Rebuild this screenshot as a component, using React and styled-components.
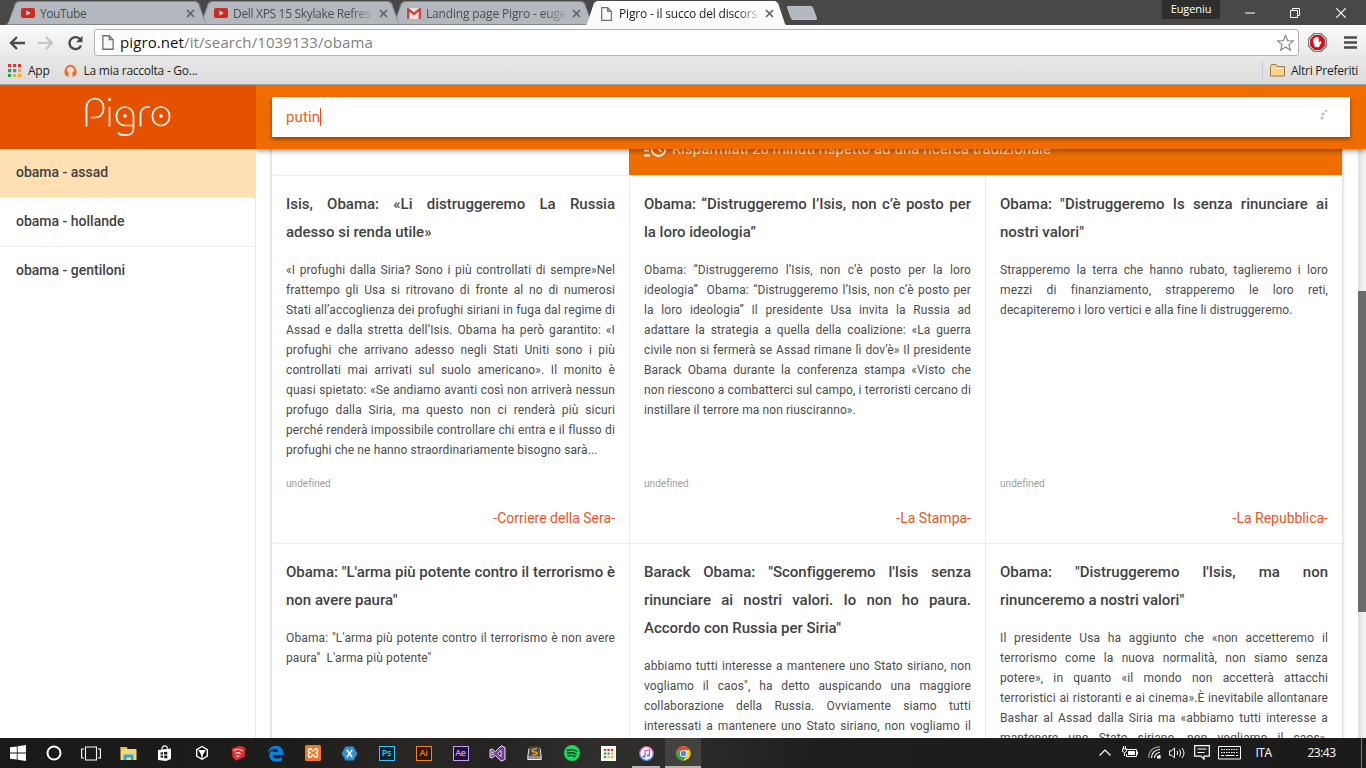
import React from 'react';
import styled, { createGlobalStyle, css } from 'styled-components';

const GlobalStyle = createGlobalStyle`
  * { box-sizing: border-box; }
  body { margin: 0; background: #fff; overflow: hidden; }
  svg { display: block; flex: none; }
`;

const ui = css`font-family: "Open Sans", "Noto Sans", sans-serif;`;

const Screen = styled.div`
  width: 1366px; height: 768px; display: flex; flex-direction: column;
  overflow: hidden; font-family: Roboto, sans-serif; color: #424242;
`;

/* Window frame */
const TitleBar = styled.div`
  height: 25px; flex: none; display: flex; align-items: flex-start;
  background: #4a4846; padding-left: 6px; ${ui}
`;
const Tab = styled.div`
  position: relative; width: 202px; height: ${p => (p.$active ? 25 : 24)}px; margin: 1px -9px 0 0;
  z-index: ${p => p.$z}; display: flex; align-items: center; padding: 0 10px 0 ${p => (p.$active ? 16 : 15)}px;
  font-size: 12px; letter-spacing: ${p => p.$spacing || 0}px; color: ${p => (p.$active ? '#1d1d1d' : '#4b4d50')};
  &::before, &::after { content: ''; position: absolute; z-index: -1; }
  &::before { inset: 0; background: ${p => (p.$active ? '#fff' : '#83868a')};
    clip-path: polygon(0 100%, 2px 92%, 9px 8%, 12px 0, 190px 0, 193px 8%, 200px 92%, 202px 100%); }
  &::after { inset: 1px 1px ${p => (p.$active ? 0 : 1)}px 1px;
    background: ${p => (p.$active ? 'linear-gradient(#fff, #f9f9f9)' : '#b3b8bf')};
    clip-path: polygon(0 100%, 2px 92%, 9px 8%, 12px 0, 188px 0, 191px 8%, 198px 92%, 200px 100%); }
`;
const TabTitle = styled.div`
  flex: 1; min-width: 0; margin-left: ${p => (p.$gap || 5)}px; overflow: hidden; white-space: nowrap; line-height: 23px;
  mask-image: ${p => (p.$fade ? 'linear-gradient(to right, #000 118px, transparent 144px)' : 'none')};
`;
const TabClose = styled.span`margin: 0 3px 0 6px; display: flex;`;
const NewTab = styled.div`
  width: 26px; height: 14px; margin: 6px 0 0 11px; background: #b3b8bf;
  border-radius: 2px; transform: skewX(20deg); border: 1px solid #c0c4ca;
`;
const User = styled.div`
  width: 58px; height: 19px; margin-left: auto; background: #2f2e2c; color: #fff;
  font-size: 11px; line-height: 18px; text-align: center; letter-spacing: -.1px;
`;
const WindowButtons = styled.div`display: flex; width: 146px; height: 25px; padding-left: 7px;`;
const WindowButton = styled.div`width: 45.500px; display: flex; align-items: center; justify-content: center;`;

const Toolbar = styled.div`
  height: 31px; flex: none; display: flex; align-items: center; padding: 4px 8px 0 8px;
  background: linear-gradient(#fafafa, #e9e9e9); ${ui}
`;
const NavIcons = styled.div`display: flex; gap: 13px; width: 86px; align-items: center; padding-left: 1px;`;
const Omnibox = styled.div`
  width: 1205px; height: 27px; background: #fff; border: 1px solid #b3b3b3; border-radius: 3px;
  display: flex; align-items: center; padding: 0 3px 0 7px;
`;
const Url = styled.div`
  margin-left: 6px; font-size: 15px; letter-spacing: .1px; color: #808080; flex: 1; line-height: 24px; padding-bottom: 1px;
  span { color: #111; }
`;
const ToolIcons = styled.div`display: flex; align-items: center; gap: 17px; margin-left: 9px;`;
const Bookmarks = styled.div`
  height: 29px; flex: none; display: flex; align-items: center; padding: 0 8px; font-size: 12px;
  background: linear-gradient(#e8e8e8, #dcdcdc); border-bottom: 1px solid #a3a3a3; color: #1f1f1f; ${ui}
`;
const Bookmark = styled.div`
  display: flex; align-items: center; gap: 7px; height: 21px; margin-left: ${p => p.$ml || 0}px;
  letter-spacing: -.25px; white-space: nowrap;
`;
const OtherBookmarks = styled(Bookmark)`
  margin-left: auto; border-left: 1px solid #c3ccd5; padding-left: 7px; gap: 6px; letter-spacing: -.25px;
`;

/* Page */
const Header = styled.header`
  height: 64px; flex: none; display: flex; position: relative; z-index: 5;
`;
const Brand = styled.div`
  width: 256px; background: #e65100; display: flex; justify-content: center; padding: 12px 0 0 0;
`;
const SearchBar = styled.div`
  flex: 1; background: #ef6c00; padding: 12px 16px; box-shadow: 0 2px 5px rgba(0,0,0,.42);
  clip-path: inset(0 0 -12px 0);
`;
const SearchField = styled.div`
  height: 40px; background: #fff; box-shadow: 0 2px 4px rgba(0,0,0,.42); display: flex; align-items: center;
  padding: 0 22px 0 14px; color: #e65c1a; font-size: 15px; font-weight: 400; letter-spacing: .1px;
`;
const Caret = styled.i`width: 1px; height: 18px; background: #e64a19; margin-right: auto;`;
const Body = styled.div`flex: 1; min-height: 0; display: flex;`;
const Sidebar = styled.nav`width: 256px; flex: none; border-right: 1px solid #e8e8e8; background: #fff;`;
const SideItem = styled.div`
  height: 49px; line-height: 47px; padding-left: 16px; font-size: 14px; font-weight: 500;
  border-bottom: 1px solid ${p => (p.$last ? 'transparent' : '#ebebeb')};
  background: ${p => (p.$active ? '#ffe0b2' : '#fff')}; background-clip: padding-box;
`;
const Main = styled.main`flex: 1; padding-left: 16px; overflow: hidden; display: flex;`;
const Sheet = styled.div`
  width: 1070px; height: 1000px; margin-top: -26px; background: #fff;
  box-shadow: 0 1px 4px rgba(0,0,0,.28);
`;
const SummaryRow = styled.div`display: grid; grid-template-columns: 357px 713px; height: 52px;`;
const Saving = styled.div`
  background: #ef6c00; display: flex; align-items: center; gap: 5px; padding: 0 0 0 15px;
  color: rgba(255,255,255,.8); font-size: 15px; font-weight: 400; grid-column: 2; letter-spacing: .05px;
`;
const Articles = styled.div`display: grid; grid-template-columns: 357px 356px 357px; grid-auto-rows: 368px;`;
const Article = styled.article`
  border-top: 1px solid #ebebeb; border-left: 1px solid ${p => (p.$first ? 'transparent' : '#ebebeb')};
  padding: 14px 14px 10px ${p => (p.$first ? 13 : 14)}px; display: flex; flex-direction: column; background: #fff;
`;
const Headline = styled.h2`
  margin: 0 0 14px; font-size: 15px; line-height: 28px; font-weight: 500; color: #424242; letter-spacing: -.01px;
`;
const Text = styled.div`font-size: 12px; line-height: 20px; color: #4c4c4c; letter-spacing: .12px;`;
const Line = styled.div`
  white-space: nowrap; text-align: justify; text-align-last: ${p => (p.$last ? 'left' : 'justify')};
`;
const Meta = styled.div`margin-top: auto; font-size: 10px; color: #9e9e9e; line-height: 20px; letter-spacing: .05px;`;
const Source = styled.div`
  margin-top: 9px; text-align: right; font-size: 14px; line-height: 30px; color: #e6561f; letter-spacing: 0;
`;
const ScrollTrack = styled.div`
  width: 8px; margin-left: auto; background: linear-gradient(to right, #dedede, #f1f1f1 70%); padding-top: 142px;
`;
const ScrollThumb = styled.div`height: 321px; background: #6b6b6b;`;

/* Taskbar */
const Taskbar = styled.div`
  height: 30px; flex: none; display: flex; align-items: stretch; color: #fff; position: relative; z-index: 6; ${ui}
  background: linear-gradient(100deg, #191919 0, #1d1d1c 22%, #292826 31%, #232322 36%, #302f2c 44%, #2a2927 52%, #1e1e1d 60%, #1b1b1b 100%);
`;
const Task = styled.div`
  width: ${p => p.$w || 37}px; display: flex; align-items: center; justify-content: center;
  background: ${p => (p.$active ? '#44423f' : 'transparent')};
  border-bottom: 2px solid ${p => (p.$open ? '#b5b5b4' : 'transparent')};
  border-top: 2px solid ${p => (p.$active ? '#44423f' : 'transparent')};
  margin: 0 ${p => (p.$inset || 0)}px;
`;
const Square = styled.div`
  width: 16px; height: 15px; border: 1px solid ${p => p.$c}; color: ${p => p.$c}; background: ${p => p.$bg};
  font-size: 9px; font-weight: 600; line-height: 12px; text-align: center; letter-spacing: -.3px;
`;
const Tray = styled.div`display: flex; align-items: center; margin-left: auto; font-size: 12px;`;
const TrayCell = styled.div`
  width: ${p => p.$w}px; display: flex; justify-content: center; letter-spacing: -.5px; padding-bottom: 1px;
`;
const ShowDesktop = styled.div`width: 5px; height: 30px; border-left: 1px solid #777;`;

const YouTube = () => (
  <svg width="14" height="10" viewBox="0 0 14 10"><rect width="14" height="10" rx="2" fill="#cc2b24" /><path d="M5.5 2.6 9.5 5 5.5 7.4z" fill="#fff" /></svg>
);
const Gmail = () => (
  <svg width="14" height="11" viewBox="0 0 14 11"><rect x="1" width="12" height="11" fill="#e4e4e4" /><path d="M1.200 11V1.200L7 6l5.800-4.800V11" fill="none" stroke="#d0433a" strokeWidth="2.300" /></svg>
);
const Page = ({ w = 11, h = 14 }) => (
  <svg width={w} height={h} viewBox="0 0 11 14"><path d="M.7.7h6l3.600 3.700v8.900H.7zM6.700.7v3.700h3.600" fill="#fafafa" stroke="#707070" strokeWidth="1.200" /></svg>
);
const Cross = ({ c = '#5f6164' }) => (
  <svg width="9" height="9" viewBox="0 0 9 9"><path d="M1 1l7 7M8 1 1 8" stroke={c} strokeWidth="1.700" /></svg>
);
const Grid = ({ s = 13, bg }) => {
  const colors = ['#e2382f', '#e2382f', '#e2382f', '#2f9e4f', '#3f83f0', '#f3ab1c', '#2f9e4f', '#f3ab1c', '#f3ab1c'];
  return (
    <svg width={s} height={s} viewBox={bg ? '-4 -4 21 21' : '0 0 13 13'}>
      {bg && <rect x="-4" y="-4" width="21" height="21" fill="#fff" />}
      {colors.map((c, i) => <rect key={i} x={(i % 3) * 5} y={Math.floor(i / 3) * 5} width="3.200" height="3.200" fill={c} />)}
    </svg>
  );
};
const Logo = () => (
  <svg width="86" height="40" viewBox="0 0 86 40" fill="none" stroke="#fff" strokeWidth="1.700">
    <path d="M1.500 29.500V10A8.500 8.500 0 0 1 18.500 10V12.500A8 8 0 0 1 10 20.500H6" />
    <path d="M24.500 10v19.500" /><circle cx="24.500" cy="2.600" r="1.500" fill="#fff" stroke="none" />
    <path d="M48.500 28.500h-8.500a8.500 8.500 0 0 1-8.500-8.500v-1.500a8.500 8.500 0 0 1 17 0v13.500a6 6 0 0 1-6 6H38q-3.500 0-5-2.500" />
    <circle cx="40" cy="19" r="1.800" fill="#fff" stroke="none" />
    <path d="M55.500 29.500V17a7 7 0 0 1 7-7h2.500" />
    <rect x="67.500" y="10" width="17" height="18.500" rx="8.500" /><circle cx="76" cy="19" r="1.800" fill="#fff" stroke="none" />
  </svg>
);

const WindowsIcon = () => <svg width="16" height="16" viewBox="0 0 16 16"><path fill="#fff" d="M0 2.300 6.800 1.400v6.100H0zM7.600 1.300 16 .1v7.400H7.600zM0 8.400h6.800v6.200L0 13.700zM7.600 8.400H16v7.500l-8.400-1.200z" /></svg>;
const Cortana = () => <svg width="16" height="16" viewBox="0 0 16 16"><circle cx="8" cy="8" r="6.500" fill="none" stroke="#fff" strokeWidth="2" /></svg>;
const TaskView = () => <svg width="20" height="15" viewBox="0 0 20 15" fill="none" stroke="#fff" strokeWidth="1.100"><path d="M4.500 1h11v13h-11zM3 3H.6v9H3M17 3h2.400v9H17" /></svg>;
const Explorer = () => <svg width="17" height="15" viewBox="0 0 17 15"><path d="M.5 1h6l1 2h9v11H.5z" fill="#f7d774" /><path d="M.5 1h6l1 1.500H.5z" fill="#e7b53c" /><path d="M3.500 14V8.500h10V14H11v-2.500H6.500V14z" fill="#2ba7dd" /></svg>;
const Store = () => <svg width="16" height="16" viewBox="0 0 16 16"><path d="M1 5l13-1.500V14l-5 2-8-1z" fill="#fff" /><path d="M5 4.500C5-.2 10.500-.2 10.500 3.800" fill="none" stroke="#fff" strokeWidth="1.200" /><path d="M3.500 7.500 6 7.200v2.300H3.500zM7 7.100l3.300-.4v2.800H7zM3.500 10.500H6v2.200l-2.500-.3zM7 10.500h3.300v2.900L7 12.900z" fill="#222" /></svg>;
const Unity = () => <svg width="14" height="16" viewBox="0 0 14 16"><path d="M7 1.500 12.300 4.600v6.600L7 14.300 1.700 11.200V4.600z" fill="#111" stroke="#fff" strokeWidth="1.400" /><path d="M3.300 5h7.400L7 11.500z" fill="#fff" /><path d="M7 9v5" stroke="#fff" strokeWidth="1.200" /></svg>;
const SketchUp = () => <svg width="15" height="16" viewBox="0 0 15 16"><path d="M.8 3.500 9 .7l5.500 2-1 9L5 15.700 1.500 12z" fill="#e22b2b" /><path d="M2.800 5.500c4-2 7-1.200 9 .5M4.500 8.200c2.800-1 4.500-.2 5 1M5 11c1.500-.4 2.500 0 3 1" fill="none" stroke="#fff" strokeWidth="1.100" /></svg>;
const Edge = () => <svg width="17" height="17" viewBox="0 0 17 17"><path fill="#0b80dc" d="M1 8.200C1.500 3.500 4.500.7 9 .7c4.800 0 7.200 3.500 7.200 7.200V10H5.700c.2 2.400 2 3.500 4.500 3.500 1.700 0 3.300-.4 4.800-1.300v3.300c-1.600.8-3.400 1.200-5.500 1.200-4 0-7.200-2.400-7.200-6.200 0-2.800 1.500-4.700 4-5.800-.5.700-.8 1.500-.8 2.300H11c0-1.800-1-3.200-3.200-3.200C5 3.800 2.500 5.500 1 8.200z" /></svg>;
const Xampp = () => <svg width="16" height="16" viewBox="0 0 16 16"><rect width="16" height="16" rx="1.500" fill="#ee7a27" /><path d="M5.700 8C2.800 8 2.800 3.800 5 3.800S6.500 6 8 6s.8-2.200 3-2.200S13.200 8 10.300 8c2.900 0 2.900 4.200.7 4.200S9.500 10 8 10s-.8 2.200-3 2.200S2.800 8 5.700 8z" fill="none" stroke="#fff" strokeWidth="1.400" /></svg>;
const Xamarin = () => <svg width="17" height="15" viewBox="0 0 17 15"><path d="M4.500.5h8l4 7-4 7h-8l-4-7z" fill="#318fd3" /><path d="M5.800 3.800l5.400 7.400M11.200 3.800 5.800 11.200" stroke="#fff" strokeWidth="1.500" /></svg>;
const VisualStudio = () => <svg width="17" height="17" viewBox="0 0 17 17"><path d="M1 4.700 3 4l3.500 2.700L12 .8l4 1.700v12l-4 1.700-5.500-5.900L3 13l-2-.7zM3 6.500v4l2-2zM12 5.500 8.700 8.500l3.300 3z" fill="#76389b" fillRule="evenodd" stroke="#fff" strokeWidth=".9" /></svg>;
const Sublime = () => <svg width="15" height="15" viewBox="0 0 15 15"><path d="M2 2.500h11l1.200 8v3H.8v-3z" fill="#8e8e8c" stroke="#eee" /><path d="M2.500.5h10l.8 9.500H1.700z" fill="#4a4a48" /><path d="M10 2.400 5.400 3.700v1.700L10 6.600v1.600L5.400 9.300" fill="none" stroke="#f29a2e" strokeWidth="1.500" /></svg>;
const Spotify = () => <svg width="16" height="16" viewBox="0 0 16 16"><circle cx="8" cy="8" r="8" fill="#1ed760" /><path d="M3 5.400c3.500-1 7.200-.7 10 .9M3.500 8.200c3-.8 6-.5 8.500.8M4 10.800c2.500-.6 4.800-.4 7 .7" fill="none" stroke="#173b22" strokeWidth="1.500" strokeLinecap="round" /></svg>;
const ITunes = () => <svg width="15" height="15" viewBox="0 0 15 15"><defs><linearGradient id="tunes" x2="0" y2="1"><stop stopColor="#f2518f" /><stop offset=".5" stopColor="#a259e6" /><stop offset="1" stopColor="#35a9ee" /></linearGradient></defs><circle cx="7.500" cy="7.500" r="6.800" fill="#fff" stroke="url(#tunes)" strokeWidth="1.300" /><path d="M6 10.500V4.700l4.500-1v5.600" fill="none" stroke="url(#tunes)" strokeWidth="1.300" /><ellipse cx="4.900" cy="10.500" rx="1.500" ry="1.200" fill="#6c6ff0" /><ellipse cx="9.400" cy="9.400" rx="1.500" ry="1.200" fill="#9a5ce8" /></svg>;
const Chrome = () => <svg width="15" height="15" viewBox="0 0 15 15"><circle cx="7.500" cy="7.500" r="7.200" fill="#f8cb2c" /><path d="M7.500 7.500 1.300 3.900A7.200 7.200 0 0 1 13.800 4H7.500z" fill="#de4b3b" /><path d="M1.300 3.900A7.200 7.200 0 0 0 7 14.700l3.400-5.500z" fill="#36a457" /><circle cx="7.500" cy="7.500" r="3.500" fill="#fff" /><circle cx="7.500" cy="7.500" r="2.700" fill="#4a87ee" /></svg>;

const articles = [
  {
    title: ['Isis, Obama: «Li distruggeremo La Russia', 'adesso si renda utile»'],
    text: ['«I profughi dalla Siria? Sono i più controllati di sempre»Nel', 'frattempo gli Usa si ritrovano di fronte al no di numerosi', 'Stati all’accoglienza dei profughi siriani in fuga dal regime di', 'Assad e dalla stretta dell’Isis. Obama ha però garantito: «I', 'profughi che arrivano adesso negli Stati Uniti sono i più', 'controllati mai arrivati sul suolo americano». Il monito è', 'quasi spietato: «Se andiamo avanti così non arriverà nessun', 'profugo dalla Siria, ma questo non ci renderà più sicuri', 'perché renderà impossibile controllare chi entra e il flusso di', 'profughi che ne hanno straordinariamente bisogno sarà...'],
    source: '-Corriere della Sera-',
  },
  {
    title: ['Obama: “Distruggeremo l’Isis, non c’è posto per', 'la loro ideologia”'],
    text: ['Obama: “Distruggeremo l’Isis, non c’è posto per la loro', 'ideologia”\u00a0 Obama: “Distruggeremo l’Isis, non c’è posto per', 'la loro ideologia” Il presidente Usa invita la Russia ad', 'adattare la strategia a quella della coalizione: «La guerra', 'civile non si fermerà se Assad rimane lì dov’è» Il presidente', 'Barack Obama durante la conferenza stampa «Visto che', 'non riescono a combatterci sul campo, i terroristi cercano di', 'instillare il terrore ma non riusciranno».'],
    source: '-La Stampa-',
  },
  {
    title: ['Obama: "Distruggeremo Is senza rinunciare ai', 'nostri valori"'],
    text: ['Strapperemo la terra che hanno rubato, taglieremo i loro', 'mezzi di finanziamento, strapperemo le loro reti,', 'decapiteremo i loro vertici e alla fine li distruggeremo.'],
    source: '-La Repubblica-',
  },
  {
    title: ['Obama: "L\'arma più potente contro il terrorismo è', 'non avere paura"'],
    text: ['Obama: "L\'arma più potente contro il terrorismo è non avere', 'paura"\u00a0 L\'arma più potente"'],
  },
  {
    title: ['Barack Obama: "Sconfiggeremo l\'Isis senza', 'rinunciare ai nostri valori. Io non ho paura.', 'Accordo con Russia per Siria"'],
    text: ['abbiamo tutti interesse a mantenere uno Stato siriano, non', 'vogliamo il caos", ha detto auspicando una maggiore', 'collaborazione della Russia. Ovviamente siamo tutti', 'interessati a mantenere uno Stato siriano, non vogliamo il'],
    more: true,
  },
  {
    title: ['Obama: "Distruggeremo l\'Isis, ma non', 'rinunceremo a nostri valori"'],
    text: ['Il presidente Usa ha aggiunto che «non accetteremo il', 'terrorismo come la nuova normalità, non siamo senza', 'potere», in quanto «il mondo non accetterà attacchi', 'terroristici ai ristoranti e ai cinema».È inevitabile allontanare', 'Bashar al Assad dalla Siria ma «abbiamo tutti interesse a', 'mantenere uno Stato siriano, non vogliamo il caos»,'],
    more: true,
  },
];

const Lines = ({ items, more }) => items.map((t, i) => (
  <Line key={t} $last={!more && i === items.length - 1}>{t}</Line>
));

export default function App() {
  return (
    <Screen>
      <GlobalStyle />
      <TitleBar>
        <Tab $z={4} $spacing={-0.45}><YouTube /><TabTitle>YouTube</TabTitle><TabClose><Cross /></TabClose></Tab>
        <Tab $z={3} $spacing={-0.32}><YouTube /><TabTitle $fade>Dell XPS 15 Skylake Refres</TabTitle><TabClose><Cross /></TabClose></Tab>
        <Tab $z={2} $spacing={-0.16}><Gmail /><TabTitle $fade>Landing page Pigro - euge</TabTitle><TabClose><Cross /></TabClose></Tab>
        <Tab $z={5} $spacing={-0.18} $active><Page /><TabTitle $fade $gap={7}>Pigro - il succo del discors</TabTitle><TabClose><Cross /></TabClose></Tab>
        <NewTab />
        <User>Eugeniu</User>
        <WindowButtons>
          <WindowButton><svg width="10" height="2"><path d="M0 1h10" stroke="#fff" /></svg></WindowButton>
          <WindowButton><svg width="10" height="10" viewBox="0 0 10 10" fill="none" stroke="#fff"><path d="M.5 2.500h7v7h-7zM2.500 2.500v-2h7v7h-2" /></svg></WindowButton>
          <WindowButton><svg width="10" height="10" viewBox="0 0 10 10"><path d="M.3.300l9.400 9.400M9.700.300.300 9.700" stroke="#fff" strokeWidth="1.200" /></svg></WindowButton>
        </WindowButtons>
      </TitleBar>
      <Toolbar>
        <NavIcons>
          <svg width="16" height="14" viewBox="0 0 16 14"><path d="M8 1 2 7l6 6M2 7h14" fill="none" stroke="#4b4b4b" strokeWidth="2.400" /></svg>
          <svg width="16" height="14" viewBox="0 0 16 14"><path d="M8 1l6 6-6 6M14 7H0" fill="none" stroke="#c4c4c4" strokeWidth="2.200" /></svg>
          <svg width="17" height="16" viewBox="0 0 17 16"><path d="M13.300 4.500A6 6 0 1 0 14 10.500" fill="none" stroke="#4b4b4b" strokeWidth="2.400" /><path d="M15.500.800v6.500H9z" fill="#4b4b4b" /></svg>
        </NavIcons>
        <Omnibox>
          <Page w={12} h={15} />
          <Url><span>pigro.net</span>/it/search/1039133/obama</Url>
          <svg width="19" height="18" viewBox="0 0 19 18"><path d="M9.500 1.200l2.100 5.500 5.900.2-4.600 3.700 1.600 5.700-5-3.200-5 3.200 1.600-5.700L1.500 6.900l5.900-.2z" fill="#fff" stroke="#888" strokeWidth="1.200" strokeLinejoin="round" /></svg>
        </Omnibox>
        <ToolIcons>
          <svg width="19" height="19" viewBox="0 0 19 19"><path d="M5.800.700h7.400l5.100 5.100v7.400l-5.100 5.100H5.800L.700 13.200V5.800z" fill="#fff" stroke="#777" strokeWidth="1.300" /><path d="M6.300 2.100h6.400l4.200 4.200v6.400l-4.200 4.200H6.300l-4.200-4.200V6.300z" fill="#d80d16" /><path d="M5.500 9.500V6h1.200v3V4.800h1.300V9 4h1.300v5-4.200h1.300V10l1.500-1.800 1.200.8-2.500 5H7.200z" fill="#fff" stroke="#fff" strokeWidth=".4" /></svg>
          <svg width="13" height="13" viewBox="0 0 13 13"><path d="M0 1.500h13M0 6.500h13M0 11.500h13" stroke="#4b4b4b" strokeWidth="2.600" /></svg>
        </ToolIcons>
      </Toolbar>
      <Bookmarks>
        <Bookmark><Grid /><span>App</span></Bookmark>
        <Bookmark $ml={14}>
          <svg width="13" height="13" viewBox="0 0 13 13"><path d="M2 9V6.300a4.500 4.500 0 0 1 9 0V9" fill="none" stroke="#ef6c1c" strokeWidth="2" /><path d="M.5 6H2v3l2.500-2v5.500H3Q.5 11 .5 9zM12.500 6H11v3L8.500 7v5.500H10q2.500-1.500 2.500-3.500z" fill="#ef6c1c" /></svg>
          <span>La mia raccolta - Go...</span>
        </Bookmark>
        <OtherBookmarks>
          <svg width="15" height="13" viewBox="0 0 15 13"><path d="M.5 2.500v9.500h14V2.500H7L6 .500H1.500z" fill="#fbd38a" stroke="#a6783c" /><path d="M1 4.500h13" stroke="#fff0c8" /></svg>
          <span>Altri Preferiti</span>
        </OtherBookmarks>
      </Bookmarks>
      <Header>
        <Brand><Logo /></Brand>
        <SearchBar>
          <SearchField>
            putin<Caret />
            <svg width="9" height="14" viewBox="0 0 9 14" fill="#bdbdbd"><circle cx="7" cy="-.5" r="1.400" transform="translate(0 1)" /><circle cx="4" cy="4" r="1.500" /><circle cx="3" cy="8" r="1.500" /></svg>
          </SearchField>
        </SearchBar>
      </Header>
      <Body>
        <Sidebar>
          <SideItem $active>obama - assad</SideItem>
          <SideItem>obama - hollande</SideItem>
          <SideItem $last>obama - gentiloni</SideItem>
        </Sidebar>
        <Main>
          <Sheet>
            <SummaryRow>
              <Saving>
                <svg width="23" height="16" viewBox="0 0 23 16" fill="none" stroke="#fff" strokeWidth="1.800"><path d="M0 5h6M0 9.500h5M0 14.500h6" /><circle cx="14.500" cy="8" r="7" /><path d="M14.500 4v4.500l3 2" /></svg>
                Risparmiati 28 minuti rispetto ad una ricerca tradizionale
              </Saving>
            </SummaryRow>
            <Articles>
              {articles.map((a, i) => (
                <Article key={i} $first={i % 3 === 0}>
                  <Headline><Lines items={a.title} /></Headline>
                  <Text><Lines items={a.text} more={a.more} /></Text>
                  {a.source && <><Meta>undefined</Meta><Source>{a.source}</Source></>}
                </Article>
              ))}
            </Articles>
          </Sheet>
          <ScrollTrack><ScrollThumb /></ScrollTrack>
        </Main>
      </Body>
      <Taskbar>
        <Task $w={36}><WindowsIcon /></Task>
        <Task $w={36}><Cortana /></Task>
        <Task $w={37}><TaskView /></Task>
        <Task $w={38}><Explorer /></Task>
        <Task $w={36}><Store /></Task>
        <Task><Unity /></Task>
        <Task><SketchUp /></Task>
        <Task><Edge /></Task>
        <Task><Xampp /></Task>
        <Task><Xamarin /></Task>
        <Task><Square $c="#3cc3f4" $bg="#0b2430">Ps</Square></Task>
        <Task><Square $c="#f5821f" $bg="#2d1606">Ai</Square></Task>
        <Task><Square $c="#cb9bf5" $bg="#1f1235">Ae</Square></Task>
        <Task><VisualStudio /></Task>
        <Task><Sublime /></Task>
        <Task><Spotify /></Task>
        <Task><Grid s={15} bg /></Task>
        <Task $w={28} $inset={5} $open><ITunes /></Task>
        <Task $w={36} $open $active><Chrome /></Task>
        <Tray>
          <TrayCell $w={24}><svg width="12" height="7" viewBox="0 0 12 7"><path d="M.5 6.500 6 1l5.500 5.500" fill="none" stroke="#fff" strokeWidth="1.200" /></svg></TrayCell>
          <TrayCell $w={25}><svg width="16" height="13" viewBox="0 0 16 13" fill="none" stroke="#fff"><path d="M5 3.500h9.500v7h-10V8M15.500 5.500v3M0 3h5M1.500 0v3M3.500 0v3M.5 3.500v2q2 2 4 0v-2M2.500 7v3" /><path d="M6.500 5.500h6v3h-6z" fill="#fff" /></svg></TrayCell>
          <TrayCell $w={24}><svg width="13" height="13" viewBox="0 0 13 13" fill="none" stroke="#fff" strokeWidth="1.200"><path d="M.8 12C.8 5 5 .800 12 .800" stroke="#999" /><path d="M3.500 12c0-5 3.500-8.500 8.500-8.500M6.500 12C6.500 9 9 6.500 12 6.500" /><path d="M9.500 12q0-2.500 2.500-2.500V12z" fill="#fff" /></svg></TrayCell>
          <TrayCell $w={23}><svg width="17" height="14" viewBox="0 0 17 14" fill="none" stroke="#fff"><path d="M.5 4.800h2.200L5.500 2v10L2.700 9.200H.5zM8 5q1.300 2 0 4M10.500 3.500q2.500 3.500 0 7M13 2q4 5 0 10" /></svg></TrayCell>
          <TrayCell $w={26}><svg width="16" height="15" viewBox="0 0 16 15" fill="none" stroke="#fff" strokeWidth="1.200"><path d="M.700.700h14.600v10.500H10v3l-3-3H.700zM3.500 4h9M3.500 7.500h7" /></svg></TrayCell>
          <TrayCell $w={29}><svg width="23" height="14" viewBox="0 0 23 14" fill="none" stroke="#fff"><path d="M.500.500h22v12.500H.500z" /><path d="M3 3.500h17M3 6.500h17" strokeDasharray="1.500 1" /><path d="M3 9.500h3M7.500 9.500h9M18 9.500h2" /></svg></TrayCell>
          <TrayCell $w={39}>ITA</TrayCell>
          <TrayCell $w={77}>23:43</TrayCell>
          <TrayCell $w={1} />
          <ShowDesktop />
        </Tray>
      </Taskbar>
    </Screen>
  );
}
